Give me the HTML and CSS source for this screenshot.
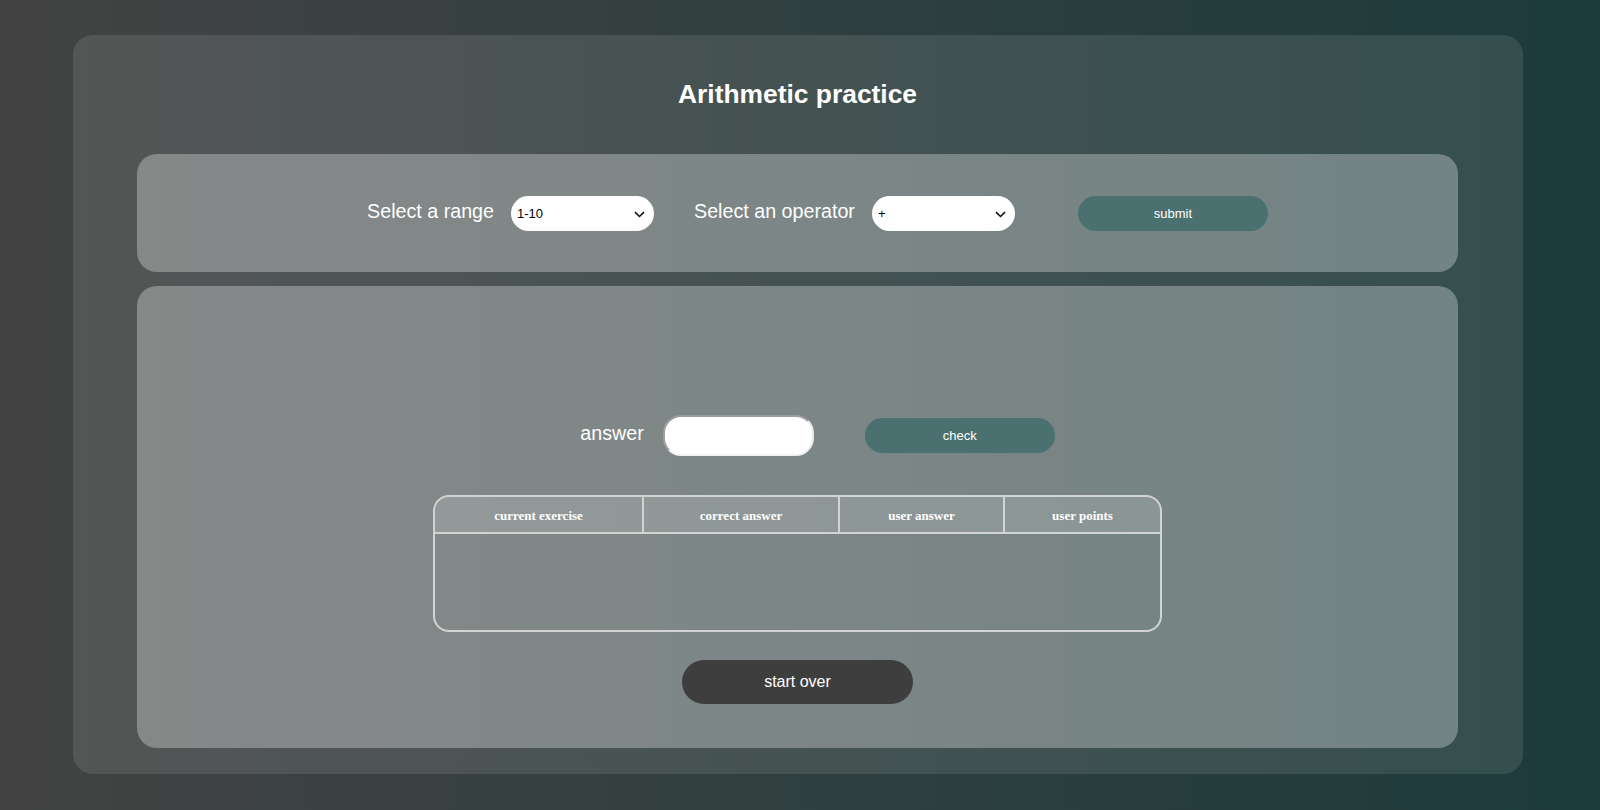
FILE: index.html
```html
<!DOCTYPE html>
<html lang="en">
<head>
<meta charset="utf-8">
<title>Arithmetic practice</title>
<link rel="stylesheet" href="styles.css">
</head>
<body>
<main class="card">
  <h1 class="title">Arithmetic practice</h1>
  <section class="panel panel-settings">
    <div class="row row-settings">
      <label class="label" for="range">Select a range</label>
      <div class="select-wrap gap-after-select">
        <select id="range" class="select">
          <option>1-10</option>
          <option>1-100</option>
        </select>
        <svg class="chevron" width="11" height="7" viewBox="0 0 11 7"><path d="M1 1.2l4.5 4.3 4.5-4.3" fill="none" stroke="#111" stroke-width="1.6"/></svg>
      </div>
      <label class="label" for="op">Select an operator</label>
      <div class="select-wrap gap-before-btn">
        <select id="op" class="select">
          <option>+</option>
          <option>-</option>
          <option>*</option>
          <option>/</option>
        </select>
        <svg class="chevron" width="11" height="7" viewBox="0 0 11 7"><path d="M1 1.2l4.5 4.3 4.5-4.3" fill="none" stroke="#111" stroke-width="1.6"/></svg>
      </div>
      <button class="btn btn-teal">submit</button>
    </div>
  </section>
  <section class="panel panel-game">
    <div class="row row-answer">
      <label class="label label-answer" for="answer">answer</label>
      <input id="answer" class="input" type="text">
      <button class="btn btn-teal">check</button>
    </div>
    <div class="table-wrap">
      <table class="results">
        <colgroup>
          <col class="c1"><col class="c2"><col class="c3"><col class="c4">
        </colgroup>
        <thead>
          <tr>
            <th>current exercise</th>
            <th>correct answer</th>
            <th>user answer</th>
            <th>user points</th>
          </tr>
        </thead>
        <tbody></tbody>
      </table>
    </div>
    <button class="btn btn-dark">start over</button>
  </section>
</main>
</body>
</html>
```

FILE: styles.css
```css
* { box-sizing: border-box; }

html, body {
  height: 100%;
}

body {
  margin: 0;
  min-height: 810px;
  background: linear-gradient(to right, #434343 0%, #1d3b3b 100%);
  font-family: "Liberation Sans", Arial, sans-serif;
  color: #fff;
  overflow: hidden;
}

.card {
  width: 1450px;
  height: 739px;
  margin: 35px 0 0 73px;
  padding: 44px 65px 26px 64px;
  background: rgba(255, 255, 255, 0.1);
  border-radius: 20px;
  display: flex;
  flex-direction: column;
}

.title {
  margin: 0 0 45px;
  font-size: 26.4px;
  line-height: 30px;
  font-weight: bold;
  text-align: center;
  color: #fff;
}

.panel {
  background: rgba(255, 255, 255, 0.3);
  border-radius: 20px;
}

.panel-settings {
  height: 118px;
  display: flex;
  align-items: center;
  justify-content: center;
  padding-left: 40px;
  margin-bottom: 14px;
}

.row {
  display: flex;
  align-items: center;
  justify-content: center;
}

.label {
  font-size: 19.7px;
  color: #fff;
  margin-right: 17px;
  margin-bottom: 4px;
}

.select-wrap {
  position: relative;
  width: 143px;
  height: 35px;
}

.gap-after-select { margin-right: 40px; }
.gap-before-btn { margin-right: 63px; }

.select {
  appearance: none;
  -webkit-appearance: none;
  width: 100%;
  height: 100%;
  border: none;
  border-radius: 18px;
  background: #fff;
  padding: 0 24px 0 6px;
  font-family: "Liberation Sans", Arial, sans-serif;
  font-size: 13px;
  color: #000;
  outline: none;
}

.chevron {
  position: absolute;
  right: 9px;
  top: 15px;
  pointer-events: none;
}

.btn {
  border: none;
  cursor: pointer;
  font-family: "Liberation Sans", Arial, sans-serif;
  color: #fff;
}

.btn-teal {
  width: 190px;
  height: 35px;
  border-radius: 18px;
  background: #4a7070;
  font-size: 13px;
}

.panel-game {
  height: 462px;
  display: flex;
  flex-direction: column;
  align-items: center;
  padding: 129px 0 0;
}

.row-answer {
  padding-left: 40px;
  height: 41px;
  margin-bottom: 39px;
}

.label-answer {
  margin-right: 19px;
}

.input {
  width: 151px;
  height: 41px;
  border-radius: 18px;
  background: #fff;
  border-style: solid;
  border-width: 2px;
  border-color: #9c9c9c #e9e9e9 #f2f2f2 #a0a0a0;
  margin-right: 51px;
  outline: none;
  font-size: 16px;
  padding: 0 10px;
}

.table-wrap {
  width: 729px;
  height: 137px;
  border: 2px solid #d2d4d4;
  border-radius: 16px;
  overflow: hidden;
  margin-bottom: 28px;
}

.results {
  width: 100%;
  border-collapse: collapse;
  table-layout: fixed;
}

.c1 { width: 208px; }
.c2 { width: 196px; }
.c3 { width: 165px; }
.c4 { width: 156px; }

.results th {
  height: 36px;
  padding: 3px 0 0;
  background: rgba(255, 255, 255, 0.14);
  border-right: 2px solid #d2d4d4;
  border-bottom: 2px solid #d2d4d4;
  font-family: "Liberation Serif", "Times New Roman", serif;
  font-size: 13px;
  font-weight: bold;
  color: #fff;
  text-align: center;
}

.results th:last-child {
  border-right: none;
}

.btn-dark {
  width: 231px;
  height: 44px;
  border-radius: 22px;
  background: #3e3e3e;
  font-size: 16px;
}
```
